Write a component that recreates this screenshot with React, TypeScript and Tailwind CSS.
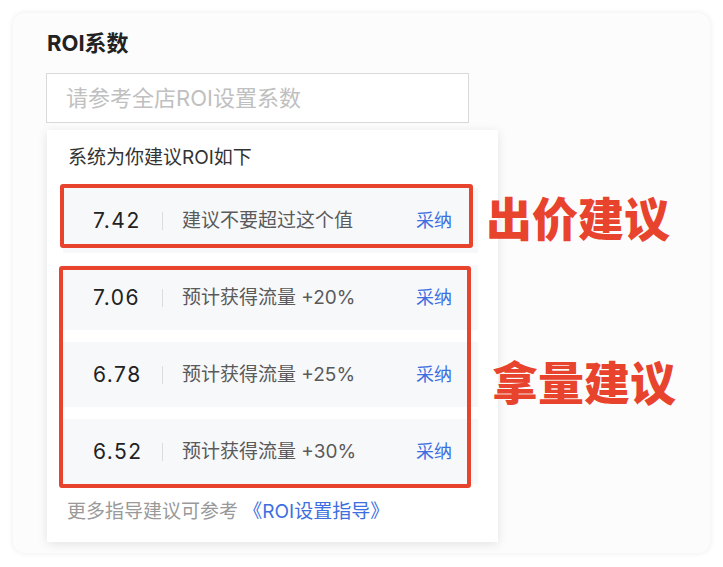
import React from "react";

const FONT = '"Inter","Noto Sans CJK SC","Noto Sans",sans-serif';

const rows = [
  { v: "7.42", t: "建议不要超过这个值" },
  { v: "7.06", t: "预计获得流量 +20%" },
  { v: "6.78", t: "预计获得流量 +25%" },
  { v: "6.52", t: "预计获得流量 +30%" },
];

function Row({ v, t }: { v: string; t: string }) {
  return (
    <div className="flex h-[65px] items-center bg-[#f7f8fa] pl-[30px] pr-[26px]">
      <span className="w-[57px] text-[21px] leading-none tracking-[1.5px] text-[#222]">{v}</span>
      <span className="ml-[12px] h-[18px] w-px bg-[#dcdcdc]" />
      <span className="ml-[19px] flex-1 text-[19px] leading-none text-[#5a5a5a]">{t}</span>
      <span className="text-[18px] leading-none text-[#3d6fe0]">采纳</span>
    </div>
  );
}

export default function App() {
  return (
    <div className="relative h-[567px] w-[723px] bg-white p-[13px]" style={{ fontFamily: FONT }}>
      <div className="flex h-[540px] w-[697px] flex-col rounded-[12px] bg-[#fcfcfc] pl-[33px] pt-[15px] shadow-[0_0_6px_rgba(0,0,0,0.08)]">
        <div className="ml-px text-[22px] font-bold leading-[30px] text-[#222]">ROI系数</div>
        <div className="mt-[15px] flex h-[50px] w-[423px] items-center border border-[#d9d9d9] bg-white pl-[19px] text-[22px] text-[#c0c0c0]">
          请参考全店ROI设置系数
        </div>
        <div className="ml-px mt-[7px] flex h-[412px] w-[451px] flex-col bg-white pb-[17px] pl-[16px] pr-[20px] pt-[15px] shadow-[0_2px_10px_rgba(0,0,0,0.1)]">
          <div className="ml-[5px] text-[19px] leading-[26px] text-[#333]">系统为你建议ROI如下</div>
          <div className="mt-[17px] flex flex-col gap-[12px]">
            {rows.map((r) => (
              <Row key={r.v} v={r.v} t={r.t} />
            ))}
          </div>
          <div className="ml-[4px] mt-[15px] text-[19px] leading-[26px] text-[#999]">
            更多指导建议可参考 <span className="text-[#3d6fe0]">《ROI设置指导》</span>
          </div>
        </div>
      </div>

      <div className="absolute left-[60px] top-[184px] h-[64px] w-[413px] rounded-[3px] border-[4px] border-[#e8432d]" />
      <div className="absolute left-[59px] top-[266px] h-[222px] w-[412px] rounded-[3px] border-[4px] border-[#e8432d]" />
      <div className="absolute left-[486px] top-[196px] text-[46px] font-black leading-none text-[#e8432d]">出价建议</div>
      <div className="absolute left-[492px] top-[360px] text-[46px] font-black leading-none text-[#e8432d]">拿量建议</div>
    </div>
  );
}
